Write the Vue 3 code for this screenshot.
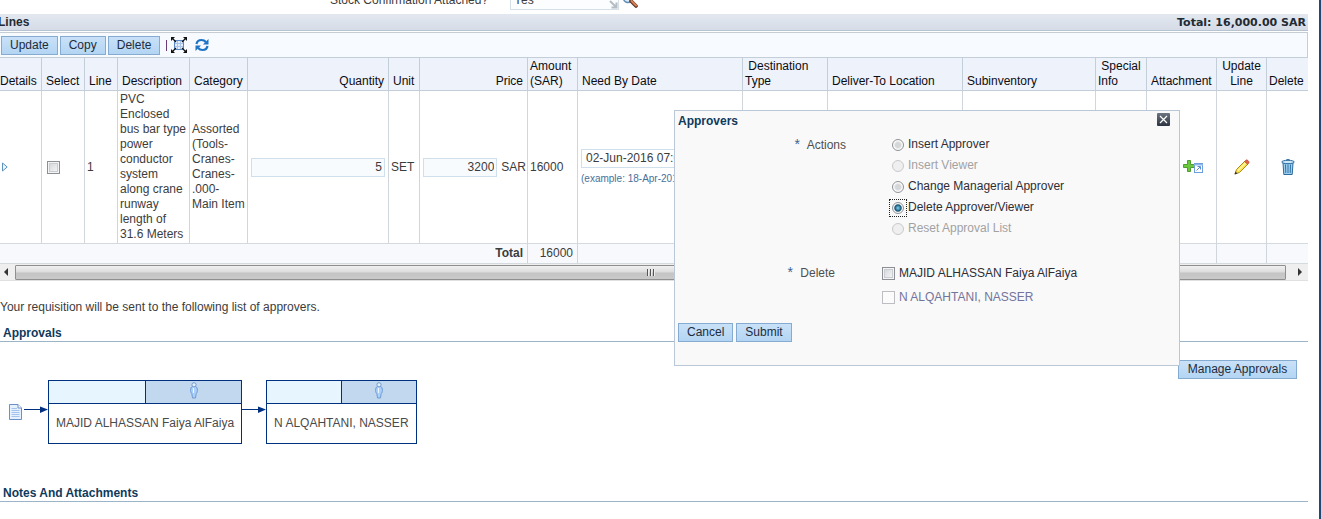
<script setup>
import { ref } from 'vue'

const stock = ref('Yes')
const quantity = ref('5')
const price = ref('3200')
const needBy = ref('02-Jun-2016 07:00:00')
const lineSelected = ref(false)
const action = ref('delete')
const removed = ref([])

const actions = [
  { id: 'insert', label: 'Insert Approver' },
  { id: 'viewer', label: 'Insert Viewer', disabled: true },
  { id: 'change', label: 'Change Managerial Approver' },
  { id: 'delete', label: 'Delete Approver/Viewer' },
  { id: 'reset', label: 'Reset Approval List', disabled: true },
]
const approvers = [
  { name: 'MAJID ALHASSAN Faiya AlFaiya' },
  { name: 'N ALQAHTANI, NASSER', disabled: true },
]
const category = ['Assorted', '(Tools-', 'Cranes-', 'Cranes-', '.000-', 'Main Item'].join('\n')
</script>

<template>
  <main class="page">
    <div class="field-row">
      <label for="stock">Stock Confirmation Attached?</label>
      <div class="lov">
        <input id="stock" v-model="stock" type="text" />
        <svg class="grip" width="9" height="9" viewBox="0 0 9 9"><path d="M1 1l6 6M2.500 7.500h5v-5" fill="none" stroke="#b4bcc4" stroke-width="2" /></svg>
      </div>
      <button class="icon-btn" aria-label="Search">
        <svg width="16" height="16" viewBox="0 0 16 16"><circle cx="6" cy="6" r="4.500" fill="#d9ecfa" stroke="#5f8db8" stroke-width="1.500" /><path d="M9 9l5 5" stroke="#5a3527" stroke-width="3.600" stroke-linecap="round" /><path d="M9.500 9l4.500 4.500" stroke="#d98050" stroke-width="2" stroke-linecap="round" /></svg>
      </button>
    </div>

    <header class="lines-head">
      <h2 class="flush">Lines</h2>
      <span>Total: 16,000.00 SAR</span>
    </header>

    <div class="toolbar">
      <button class="btn">Update</button>
      <button class="btn">Copy</button>
      <button class="btn">Delete</button>
      <i class="sep"></i>
      <button class="icon-btn detach" aria-label="Detach">
        <svg width="16" height="16" viewBox="0 0 16 16"><rect x="3.500" y="3.500" width="9" height="9" fill="#e4eefb" stroke="#5b86c4" /><path d="M4 6.500h8M4 9.500h8M6.500 4v8M9.500 4v8" stroke="#a9c4e8" /><path d="M0 0h4L0 4zM16 0v4l-4-4zM0 16v-4l4 4zM16 16h-4l4-4z" fill="#111" /><path d="M1 1l4 4M15 1l-4 4M1 15l4-4M15 15l-4-4" stroke="#111" stroke-width="1.200" /></svg>
      </button>
      <button class="icon-btn" aria-label="Refresh">
        <svg width="14" height="14" viewBox="0 0 14 14"><path d="M1.500 6C2 3 4 2 6.500 2c2 0 3.300.7 4.300 2" fill="none" stroke="#1c74c4" stroke-width="2.200" /><path d="M13.500 1v5.500H8z" fill="#1c74c4" /><path d="M12.500 8c-.5 3-2.500 4-5 4-2 0-3.300-.7-4.300-2" fill="none" stroke="#1c74c4" stroke-width="2.200" /><path d="M.5 13V7.500H6z" fill="#1c74c4" /></svg>
      </button>
    </div>

    <table class="lines">
      <colgroup>
        <col class="c42" /><col class="c43" /><col class="c33" /><col class="c72" /><col class="c58" />
        <col class="c141" /><col class="c31" /><col class="c108" /><col class="c50" /><col />
        <col class="c85" /><col class="c135" /><col class="c133" /><col class="c51" /><col class="c70" />
        <col class="c50" /><col class="c41" />
      </colgroup>
      <thead>
        <tr>
          <th class="bare">Details</th><th>Select</th><th>Line</th><th>Description</th><th>Category</th>
          <th class="num">Quantity</th><th>Unit</th><th class="num">Price</th><th class="tight">Amount<br />(SAR)</th><th>Need By Date</th>
          <th class="tight">&nbsp;Destination<br />Type</th><th>Deliver-To Location</th><th>Subinventory</th><th class="tight">&nbsp;Special<br />Info</th>
          <th>Attachment</th><th class="mid">Update<br />Line</th><th class="tight">Delete</th>
        </tr>
      </thead>
      <tbody>
        <tr>
          <td>
            <button class="icon-btn" aria-label="Show details">
              <svg width="6" height="10" viewBox="0 0 6 10"><path d="M.5 1v8L5.200 5z" fill="#eef6fc" stroke="#5c93bd" /></svg>
            </button>
          </td>
          <td class="pick"><input v-model="lineSelected" type="checkbox" class="check" aria-label="Select line 1" /></td>
          <td>1</td>
          <td>PVC Enclosed bus bar type power conductor system along crane runway length of 31.6 Meters</td>
          <td class="pre">{{ category }}</td>
          <td class="boxed"><input v-model="quantity" class="box right" type="text" aria-label="Quantity" /></td>
          <td>SET</td>
          <td class="boxed"><div class="price"><input v-model="price" class="box right" type="text" aria-label="Price" /><span>SAR</span></div></td>
          <td>16000</td>
          <td class="boxed">
            <input v-model="needBy" class="box date" type="text" aria-label="Need By Date" />
            <small>(example: 18-Apr-2016 19:45:00)</small>
          </td>
          <td></td><td></td><td></td><td></td>
          <td>
            <button class="icon-btn attach" aria-label="Add attachment">
              <svg width="21" height="16" viewBox="0 0 21 16"><path d="M4.500 1.500h3v4h4v3h-4v4h-3v-4h-4v-3h4z" fill="#6cc83c" stroke="#4f9c30" /><rect x="11.500" y="4.500" width="8" height="9" fill="#fff" stroke="#6e9fdc" /><path d="M11 5h9v1.500h-9z" fill="#8db6ea" /><path d="M13.500 11.500l3.500-3.500M14.500 7.500h3v3" fill="none" stroke="#5a8ed4" /></svg>
            </button>
          </td>
          <td class="mid">
            <button class="icon-btn" aria-label="Update line">
              <svg width="16" height="16" viewBox="0 0 16 16"><path d="M1 15l1.500-4.500L11 2l3 3-8.500 8.500z" fill="#fbe24a" stroke="#ab8a1e" /><path d="M4 11.500L11.500 4" stroke="#fff6a8" stroke-width="1.400" /><path d="M10.500 2.500L12 1c1-.8 3.800 1.700 3 3l-1.500 1.500z" fill="#e0604c" stroke="#b4503c" stroke-width=".6" /><path d="M.5 15.500l1-3 2 2z" fill="#333" /></svg>
            </button>
          </td>
          <td class="mid">
            <button class="icon-btn" aria-label="Delete line">
              <svg width="14" height="16" viewBox="0 0 14 16"><path d="M2 4h10l-.8 11.500H2.800z" fill="#9fd0f0" stroke="#2b6a9c" /><path d="M4.500 5.500l.3 8.500M7 5.500V14M9.500 5.500L9.200 14" stroke="#2f73a8" /><ellipse cx="7" cy="3" rx="6.300" ry="1.700" fill="#cbe7f8" stroke="#2b6a9c" /><path d="M5 1.300C5.500.3 8.500.3 9 1.300" fill="none" stroke="#2b6a9c" /></svg>
            </button>
          </td>
        </tr>
      </tbody>
      <tfoot>
        <tr>
          <td colspan="8" class="num"><b>Total</b></td>
          <td class="num">16000</td>
          <td colspan="6"></td><td></td><td></td>
        </tr>
      </tfoot>
    </table>

    <div class="scroller">
      <button class="arrow" aria-label="Scroll left"><svg width="4" height="8" viewBox="0 0 4 8"><path d="M4 0v8L0 4z" fill="#333" /></svg></button>
      <div class="thumb"><i></i><i></i><i></i></div>
      <button class="arrow next" aria-label="Scroll right"><svg width="4" height="8" viewBox="0 0 4 8"><path d="M0 0v8l4-4z" fill="#333" /></svg></button>
    </div>

    <p class="note">Your requisition will be sent to the following list of approvers.</p>

    <h3 class="section">Approvals</h3>
    <div class="manage"><button class="btn wide">Manage Approvals</button></div>

    <div class="chain">
      <svg class="doc" width="13" height="16" viewBox="0 0 13 16"><path d="M.5.5H9L12.500 4v11.500H.5z" fill="#e6f1fe" stroke="#6d8fc8" /><path d="M9 .5V4h3.500" fill="#fff" stroke="#6d8fc8" /><path d="M2.500 4.500H8M2.500 6.500h8M2.500 8.500h8M2.500 10.500h8M2.500 12.500h8" stroke="#a4c2ec" /></svg>
      <template v-for="a in approvers" :key="a.name">
        <svg class="link" width="24" height="8" viewBox="0 0 24 8"><path d="M0 3.500h17" stroke="#003080" /><path d="M16 .5L24 3.500 16 7z" fill="#003080" /></svg>
        <div class="card">
          <div class="cap">
            <span></span>
            <span class="who"><svg width="8" height="17" viewBox="0 0 8 17"><path d="M2.500 4.500C1 5 .6 6.500.6 8.500c0 1.500.4 2.500 1.200 3l.7 4.500h3l.7-4.500c.8-.5 1.200-1.500 1.200-3 0-2-.4-3.500-1.900-4z" fill="#a9d0fb" stroke="#6a94cc" stroke-width=".9" /><circle cx="4" cy="2.800" r="2.100" fill="#e2f0ff" stroke="#6a94cc" stroke-width=".9" /><path d="M3.500 6v5" stroke="#f0f8ff" /></svg></span>
          </div>
          <div class="name">{{ a.name }}</div>
        </div>
      </template>
    </div>

    <h3 class="section">Notes And Attachments</h3>

    <section class="dialog" role="dialog" aria-labelledby="dialog-title">
      <header>
        <h3 id="dialog-title">Approvers</h3>
        <button class="close" aria-label="Close"><svg width="13" height="13" viewBox="0 0 13 13"><path d="M3 3l7 7M10 3l-7 7" stroke="#fff" stroke-width="1.200" /></svg></button>
      </header>
      <fieldset class="actions">
        <legend><b>*</b> Actions</legend>
        <div class="options">
          <label v-for="a in actions" :key="a.id" :class="{ off: a.disabled }">
            <span :class="{ ring: action === a.id }"><input v-model="action" type="radio" name="action" :value="a.id" :disabled="a.disabled" /></span>{{ a.label }}
          </label>
        </div>
      </fieldset>
      <fieldset class="removal">
        <legend><b>*</b> Delete</legend>
        <div class="options">
          <label v-for="a in approvers" :key="a.name" :class="{ dim: a.disabled }">
            <input v-model="removed" type="checkbox" class="check" :value="a.name" :disabled="a.disabled" />{{ a.name }}
          </label>
        </div>
      </fieldset>
      <footer>
        <button class="btn">Cancel</button>
        <button class="btn">Submit</button>
      </footer>
    </section>
  </main>
</template>

<style>
body { margin: 0; background: #fff; overflow: hidden; }
</style>

<style scoped>
* { box-sizing: border-box; }
.page {
  position: relative;
  min-height: 100vh;
  overflow: hidden;
  padding-right: 11px;
  border-right: 2px solid #1f4a78;
  font: 12px/15px "Liberation Sans", Arial, sans-serif;
  color: #3c3c3c;
}
button, input { font: inherit; color: inherit; margin: 0; }
h2, h3, p { margin: 0; }
svg { display: block; }
.flush { text-indent: -2px; }

.btn {
  height: 19px;
  padding: 0 8px;
  border: 1px solid #86abd0;
  background: linear-gradient(#c9e1f8, #b3d5f3);
  color: #1c2c40;
  line-height: 17px;
}
.icon-btn { display: inline-block; padding: 0; border: 0; background: none; vertical-align: middle; }

.field-row { display: flex; align-items: center; gap: 3px; height: 28px; margin-top: -14px; padding-left: 330px; }
.lov { position: relative; width: 109px; margin-left: 19px; }
.field-row .lov input { display: block; width: 100%; height: 19px; padding: 0 3px; border: 1px solid #d5dfe8; background: #fbfdfe; }
.grip { position: absolute; right: 1px; bottom: 1px; }

.lines-head {
  display: flex;
  justify-content: space-between;
  height: 17px;
  padding-right: 2px;
  border-bottom: 1px solid #b6c3d0;
  background: linear-gradient(#e3e8f0, #d5dce7);
  font: bold 11px/17px "DejaVu Sans", sans-serif;
  color: #222a33;
}
.lines-head h2 { font: bold 12px/17px "Liberation Sans", Arial, sans-serif; }

.toolbar {
  display: flex;
  align-items: center;
  gap: 2px;
  height: 25px;
  margin-top: 1px;
  padding-left: 1px;
  border-top: 1px solid #c6ccd4;
  border-right: 1px solid #c3cedb;
  background: #f7fafe;
}
.sep { width: 1px; height: 11px; margin: 0 2px 0 4px; background: #6a3c78; }
.detach { margin-right: 6px; }

.lines { width: 100%; table-layout: fixed; border-collapse: separate; border-spacing: 0; }
.c31 { width: 31px; } .c33 { width: 33px; } .c41 { width: 41px; } .c42 { width: 42px; } .c43 { width: 43px; }
.c50 { width: 50px; } .c51 { width: 51px; } .c58 { width: 58px; } .c70 { width: 70px; } .c72 { width: 72px; }
.c85 { width: 85px; } .c108 { width: 108px; } .c133 { width: 133px; } .c135 { width: 135px; } .c141 { width: 141px; }
.lines th {
  padding: 1px 3px 1px 4px;
  border-bottom: 1px solid #c3ced9;
  border-right: 1px solid #c3ced9;
  background: #eef2fa;
  color: #0c0c14;
  font-weight: normal;
  text-align: left;
  vertical-align: bottom;
  white-space: nowrap;
}
.lines thead th { border-top: 1px solid #c3ced9; }
.lines th.bare { padding: 1px 0; }
.lines th.tight { padding-left: 2px; }
.lines .num { text-align: right; padding-right: 4px; }
.lines .mid { text-align: center; padding-left: 1px; padding-right: 1px; }
.lines td { padding: 1px 2px; border-bottom: 1px solid #d4dade; border-right: 1px solid #d0d6dc; overflow: hidden; }
.lines th:last-child, .lines td:last-child { border-right: 0; }
.lines tfoot td { height: 20px; background: #f7f9fd; }
.lines .pre { white-space: pre; }
.lines td.boxed { padding: 1px 3px; }
.lines td.pick { padding-left: 5px; }
.box { display: block; width: 100%; height: 19px; padding: 0 2px; border: 1px solid #cfe0ec; background: #f7fbfe; }
.right { text-align: right; }
.date { padding: 0 4px; background: #fff; }
.price { display: flex; align-items: center; gap: 4px; margin-right: -2px; }
.price .box { flex: 1; min-width: 0; }
small { display: block; margin-top: 3px; font-size: 10px; line-height: 15px; color: #47719b; white-space: nowrap; }
.attach { margin-left: 34px; }

.check {
  appearance: none;
  display: block;
  flex: none;
  width: 13px;
  height: 13px;
  border: 1px solid #8c8f94;
  background: linear-gradient(135deg, #cfd2d6, #fafafa);
  box-shadow: inset 0 0 0 1px #f4f4f4, inset 0 0 0 2px #c9ccd0;
}
.check:disabled { border-color: #bcbec2; background: #fbfbfb; box-shadow: none; }

.scroller { display: flex; height: 17px; background: #efefef; border-bottom: 1px solid #e0e0e0; }
.arrow { display: flex; align-items: center; justify-content: center; width: 15px; padding: 0 4px 0 0; border: 0; background: none; }
.arrow.next { width: 22px; padding: 0 0 0 5px; }
.thumb {
  flex: 1;
  display: flex;
  justify-content: center;
  align-items: center;
  gap: 1px;
  margin-top: 1px;
  border: 1px solid #8f8f8f;
  border-radius: 1px;
  background: linear-gradient(#f0f0f0, #dcdcdc 48%, #c4c4c4 52%, #c9c9c9);
}
.thumb i { width: 2px; height: 7px; border-left: 1px solid #555; background: #eee; }

.note { margin-top: 19px; }
.section { padding-left: 3px; border-bottom: 1px solid #9cb4c8; color: #0f3a5c; font-size: 12px; line-height: 16px; }
.note + .section { margin-top: 10px; }
.manage { display: flex; justify-content: flex-end; margin: 18px 11px 1px 0; }
.btn.wide { min-width: 119px; }

.chain { display: flex; align-items: flex-start; margin-bottom: 41px; padding-left: 9px; }
.doc { margin: 24px 2px 0 0; }
.link { margin-top: 26px; }
.card { border: 1px solid #003080; background: #fff; }
.cap { display: grid; grid-template-columns: 1fr 1fr; height: 23px; border-bottom: 1px solid #003080; background: #e7f5ff; }
.who { display: flex; justify-content: center; align-items: flex-start; padding-top: 1px; border-left: 1px solid #003080; background: #c2d8ee; }
.name { padding: 12px 7px; color: #4a4a4a; }

.dialog {
  position: absolute;
  top: 110px;
  left: 674px;
  width: 506px;
  padding: 2px 9px 23px 3px;
  border: 1px solid #b9c7d6;
  background: #f9f9fa;
}
.dialog header { display: flex; justify-content: space-between; align-items: flex-start; }
.dialog h3 { color: #0f3a5c; font-size: 12px; line-height: 17px; }
.close { width: 13px; height: 13px; padding: 0; border: 0; border-radius: 1px; background: linear-gradient(#6b7480, #2b3440); }
fieldset { display: flex; min-width: 0; margin: 0; padding: 0; border: 0; }
legend { float: left; padding: 0; line-height: 20px; color: #4f4f4f; text-align: right; }
legend b { margin-right: 4px; color: #3c6390; font-weight: normal; font-size: 14px; }
.actions { margin-top: 4px; }
.actions legend { width: 168px; }
.actions .options { padding-left: 46px; }
.removal { margin-top: 22px; }
.removal legend { width: 157px; line-height: 22px; }
.removal .options { padding-left: 47px; }
.options label { display: flex; align-items: center; gap: 4px; height: 21px; color: #2e2e36; }
.removal label { height: 24px; }
.options .off { color: #a2a2a2; }
.options .dim { color: #74749a; }
.options input[type="radio"] {
  appearance: none;
  display: block;
  width: 12px;
  height: 12px;
  border: 1px solid #8f9296;
  border-radius: 50%;
  background: radial-gradient(circle, #d4d6d8 35%, #fafafa 60%);
}
.options input[type="radio"]:disabled { border-color: #c8c9cb; background: #efefef; }
.options input[type="radio"]:checked { background: radial-gradient(circle, #6fc0e4 8%, #14506f 45%, #f4f4f4 60%); }
.ring { outline: 1px dotted #222; outline-offset: 2px; }
.dialog footer { display: flex; gap: 3px; margin-top: 14px; }
</style>
